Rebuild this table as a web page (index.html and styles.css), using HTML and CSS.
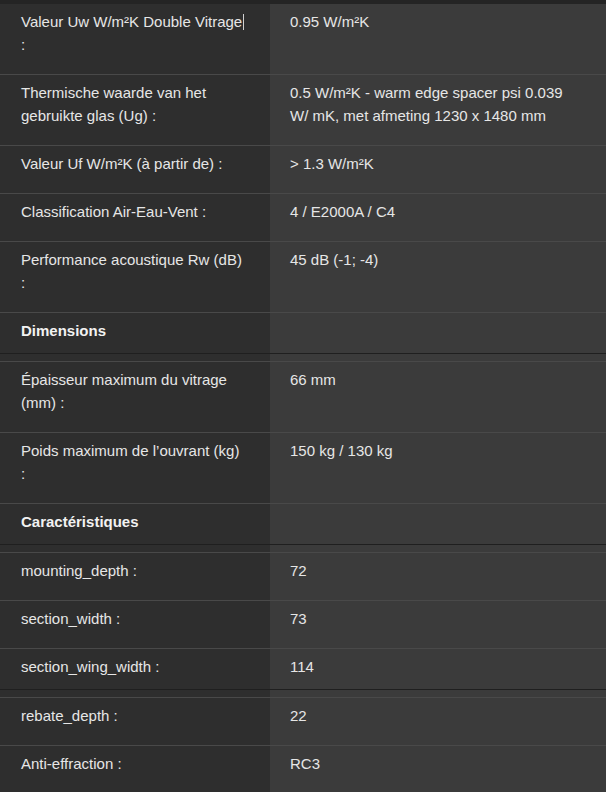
FILE: index.html
```html
<!DOCTYPE html>
<html lang="fr">
<head>
    <meta charset="UTF-8">
    <meta name="viewport" content="width=device-width, initial-scale=1.0">
    <title>Caractéristiques techniques</title>
<link rel="stylesheet" href="styles.css">
</head>
<body>
<div id="wrap">
    <!-- groupe 1 : thermique -->
    <div class="group first">
        <div class="row">
            <div class="label">Valeur Uw W/m²K Double Vitrage<span class="caret"></span> :</div>
            <div class="value">0.95 W/m²K</div>
        </div>
        <div class="row">
            <div class="label">Thermische waarde van het gebruikte glas (Ug) :</div>
            <div class="value">0.5 W/m²K - warm edge spacer psi 0.039 W/ mK, met afmeting 1230 x 1480 mm</div>
        </div>
        <div class="row">
            <div class="label">Valeur Uf W/m²K (à partir de) :</div>
            <div class="value">&gt; 1.3 W/m²K</div>
        </div>
        <div class="row">
            <div class="label">Classification Air-Eau-Vent :</div>
            <div class="value">4 / E2000A / C4</div>
        </div>
        <div class="row">
            <div class="label">Performance acoustique Rw (dB) :</div>
            <div class="value">45 dB (-1; -4)</div>
        </div>
        <div class="row head">
            <div class="label">Dimensions</div>
            <div class="value"></div>
        </div>
    </div>

    <!-- groupe 2 : dimensions -->
    <div class="group">
        <div class="row">
            <div class="label">Épaisseur maximum du vitrage (mm) :</div>
            <div class="value">66 mm</div>
        </div>
        <div class="row">
            <div class="label">Poids maximum de l’ouvrant (kg) :</div>
            <div class="value">150 kg / 130 kg</div>
        </div>
        <div class="row head">
            <div class="label">Caractéristiques</div>
            <div class="value"></div>
        </div>
    </div>

    <!-- groupe 3 : profils -->
    <div class="group">
        <div class="row">
            <div class="label">mounting_depth :</div>
            <div class="value">72</div>
        </div>
        <div class="row">
            <div class="label">section_width :</div>
            <div class="value">73</div>
        </div>
        <div class="row">
            <div class="label">section_wing_width :</div>
            <div class="value">114</div>
        </div>
    </div>

    <!-- groupe 4 -->
    <div class="group">
        <div class="row">
            <div class="label">rebate_depth :</div>
            <div class="value">22</div>
        </div>
        <div class="row">
            <div class="label">Anti-effraction :</div>
            <div class="value">RC3</div>
        </div>
    </div>
</div>
</body>
</html>
```

FILE: styles.css
```css
* {margin: 0; padding: 0; box-sizing: border-box;}

body {min-height: 100vh; background: linear-gradient(90deg, #2e2e2e 270px, #3b3b3b 270px);
    font-family: "Liberation Sans", Arial, sans-serif; font-size: 15px; line-height: 23px; color: #e6e6e6;}

#wrap {width: 100%;}

/* groupe = un tableau, colonne gauche plus sombre */
.group {border-top: 1px solid #1f1f1f; padding-top: 7px;
    background: linear-gradient(90deg, #2e2e2e 270px, #3b3b3b 270px);}
.group.first {border-top: 3px solid #242424; padding-top: 0;}
.group.first .row:first-child {border-top-color: #242424;}

.row {display: grid; grid-template-columns: 270px 1fr; border-top: 1px solid #494949;}
.row .label {padding: 6px 24px 18px 21px;}
.row .value {padding: 6px 30px 18px 20px;}

/* derniere ligne du groupe : moins de marge en bas */
.row:last-child .label,
.row:last-child .value {padding-bottom: 11px;}

.row.head .label {font-weight: bold; color: #f2f2f2;}

/* curseur texte */
.caret {display: inline-block; width: 1px; height: 16px; margin-left: 1px; background-color: #d0d0d0; vertical-align: -3px;}
```
